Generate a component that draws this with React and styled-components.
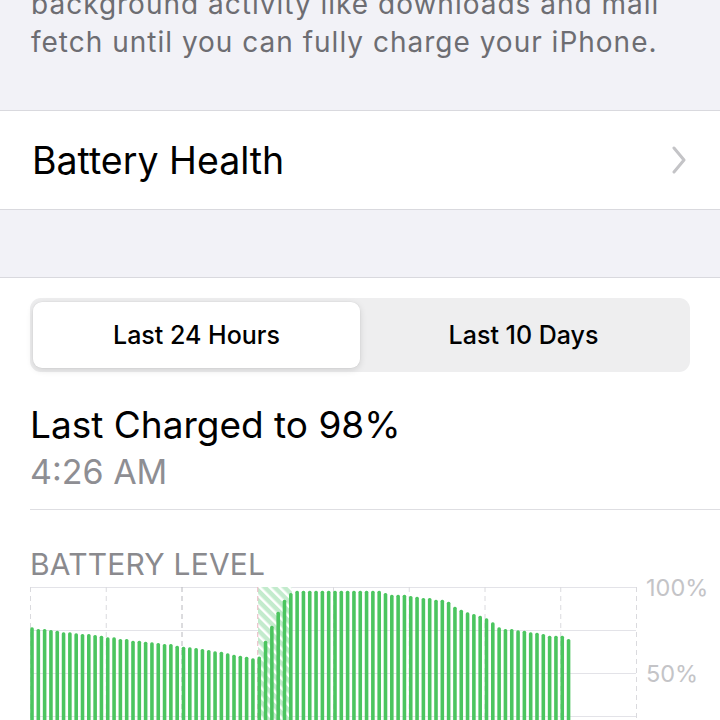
import React from 'react';
import styled, { createGlobalStyle } from 'styled-components';

const GlobalStyle = createGlobalStyle`
  html, body {
    margin: 0;
    padding: 0;
    background: #f2f2f7;
    overflow: hidden;
  }
  body {
    font-family: 'Inter', 'Liberation Sans', sans-serif;
    -webkit-font-smoothing: antialiased;
  }
`;

const Page = styled.div`
  width: 720px;
  height: 720px;
  overflow: hidden;
  background: #f2f2f7;
`;

const FooterNote = styled.p`
  margin: -15px 0 0;
  padding: 0 30px 49px 31px;
  font-size: 28px;
  line-height: 38px;
  letter-spacing: 1px;
  color: #6d6d72;
`;

const Group = styled.div`
  background: #fff;
  border-top: 1px solid #d9d9de;
  border-bottom: 1px solid #d9d9de;
`;

const Row = styled.div`
  height: 98px;
  display: flex;
  align-items: center;
  justify-content: space-between;
  padding: 0 34px 0 32px;
  font-size: 37.5px;
  color: #000;
`;

const Gap = styled.div`
  height: 67px;
`;

const Card = styled.div`
  background: #fff;
  border-top: 1px solid #d9d9de;
  padding: 20px 0 0 30px;
`;

const Segmented = styled.div`
  display: grid;
  grid-template-columns: 1fr 1fr;
  height: 74px;
  box-sizing: border-box;
  margin-right: 30px;
  padding: 4px 3px;
  border-radius: 11px;
  background: #eeeeef;
`;

const Segment = styled.div`
  display: flex;
  align-items: center;
  justify-content: center;
  border-radius: 9px;
  font-size: 25px;
  font-weight: 500;
  color: #000;
  background: ${p => (p.$active ? '#fff' : 'transparent')};
  box-shadow: ${p => (p.$active ? '0 2px 7px rgba(0,0,0,0.13), 0 0 0 0.5px rgba(0,0,0,0.04)' : 'none')};
`;

const Title = styled.div`
  margin-top: 31px;
  font-size: 37px;
  line-height: 44px;
  color: #000;
`;

const Subtitle = styled.div`
  margin-top: 4px;
  font-size: 34px;
  line-height: 42px;
  color: #8e8e93;
`;

const Divider = styled.div`
  margin-top: 16px;
  height: 1px;
  background: #dedee2;
`;

const SectionHeader = styled.div`
  margin-top: 36px;
  font-size: 30px;
  line-height: 36px;
  letter-spacing: 0.2px;
  color: #8a8a8e;
`;

const Chart = styled.svg`
  display: block;
  margin-top: 5px;
  overflow: visible;
`;

const Chevron = () => (
  <svg width="14" height="28" viewBox="0 0 14 28">
    <polyline points="2,2 12,14 2,26" fill="none" stroke="#c4c4c7" strokeWidth="3" strokeLinecap="round" strokeLinejoin="round" />
  </svg>
);

const TOPS = [
  40.3, 42, 42, 43, 43.7, 45.3, 45.3, 46.3, 47, 47, 48, 48.7, 50.3, 50.3, 52, 52, 53.7, 53.7,
  54.7, 55.3, 56, 57, 57, 58.7, 59.7, 60.3, 61, 62, 63, 64.3, 64.7, 66.3, 67.7, 68.7, 69.7, 71.3,
  69.5, 53.7, 38.7, 24.7, 12.7, 6,
  3.7, 3.7, 3.7, 3.7, 3.7, 3.7, 3.7, 3.7, 3.7, 3.7, 3.7, 3.7, 3.7, 3.7,
  6, 7.7, 7.7, 7.7, 9, 9.7, 11, 11, 12.7, 12.7, 14.7, 19.7, 22.7, 25.3, 27, 28.7, 31.3, 35.3,
  40.3, 42, 42, 43.3, 43.7, 45.3, 45.7, 47, 48.7, 48.7, 48.7, 52,
];

const FULL = 172;
const COL = 75.75;
const PITCH = COL / 12;

const vColor = k => (k === 2 ? '#b8b8bd' : k === 3 ? '#e8b4c0' : '#dadade');

const BatteryChart = () => (
  <Chart width="690" height="140" viewBox="0 0 690 140">
    <defs>
      <pattern id="hatch" width="7" height="7" patternUnits="userSpaceOnUse" patternTransform="rotate(-45)">
        <rect width="7" height="7" fill="#c3ebcd" />
        <rect width="2.5" height="7" fill="#ffffff" />
      </pattern>
    </defs>
    {[0, 43, 86, 129, 172].map(y => (
      <line key={y} x1="0" x2={COL * 8} y1={y + 0.5} y2={y + 0.5} stroke="#e3e3e8" strokeWidth="1" />
    ))}
    <rect x="228" y="0" width="34" height={FULL} fill="url(#hatch)" />
    {Array.from({ length: 9 }, (_, k) => (
      <line
        key={k}
        x1={COL * k + 0.5}
        x2={COL * k + 0.5}
        y1="0"
        y2={FULL}
        stroke={vColor(k)}
        strokeWidth="1"
        strokeDasharray="5 4"
      />
    ))}
    {TOPS.map((t, i) => (
      <rect key={i} x={2 + PITCH * i - 1.8} y={t} width="3.6" height={FULL - t + 4} rx="1.6" fill="#4bc55f" />
    ))}
    <text x="616" y="0" dominantBaseline="central" fontSize="23.5" fill="#c4c4c7" fontFamily="Inter, sans-serif">100%</text>
    <text x="616" y="86" dominantBaseline="central" fontSize="23.5" fill="#c4c4c7" fontFamily="Inter, sans-serif">50%</text>
  </Chart>
);

export default function App() {
  return (
    <Page>
      <GlobalStyle />
      <FooterNote>
        background activity like downloads and mail fetch until you can fully charge your iPhone.
      </FooterNote>
      <Group>
        <Row>
          <span>Battery Health</span>
          <Chevron />
        </Row>
      </Group>
      <Gap />
      <Card>
        <Segmented>
          <Segment $active>Last 24 Hours</Segment>
          <Segment>Last 10 Days</Segment>
        </Segmented>
        <Title>Last Charged to 98%</Title>
        <Subtitle>4:26 AM</Subtitle>
        <Divider />
        <SectionHeader>BATTERY LEVEL</SectionHeader>
        <BatteryChart />
      </Card>
    </Page>
  );
}
